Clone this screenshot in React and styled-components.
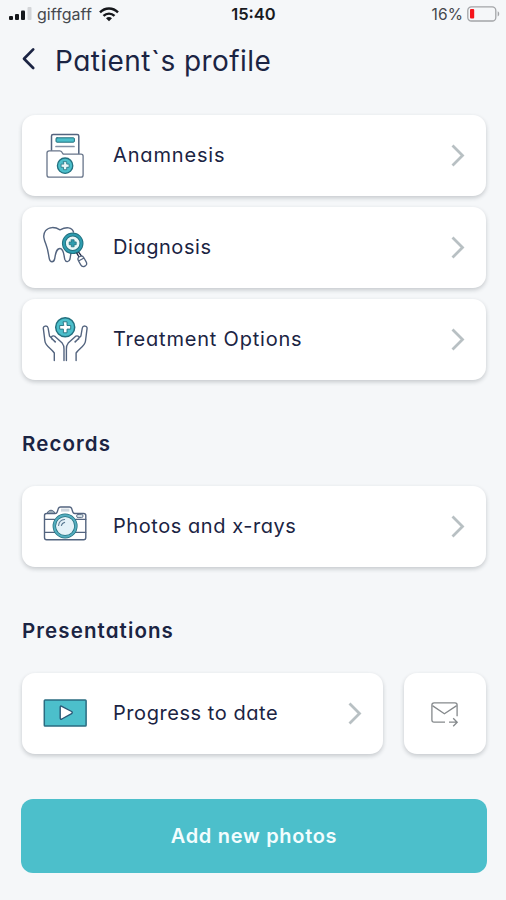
import React from "react";
import styled, { createGlobalStyle } from "styled-components";

const INK = "#1b2443";
const LINE = "#53647f";
const TEAL = "#4cbfcb";
const DEEP = "#23707f";

const App = () => {
  return (
    <>
      <GlobalStyle />
      <Screen>
        <StatusBar>
          <Carrier>
            <SignalIcon />
            <Network>giffgaff</Network>
            <WifiIcon />
          </Carrier>
          <Clock>15:40</Clock>
          <Power>
            <Percent>16%</Percent>
            <BatteryIcon />
          </Power>
        </StatusBar>

        <Header>
          <BackButton aria-label="Back">
            <svg width="14" height="24" viewBox="0 0 14 24" fill="none">
              <path d="M11.2 2.4 L2 11.8 L11.2 21" stroke={INK} strokeWidth="2.7" strokeLinecap="round" strokeLinejoin="round" />
            </svg>
          </BackButton>
          <Title>Patient`s profile</Title>
        </Header>

        <CardList>
          <MenuCard icon={<FolderIcon />} label="Anamnesis" track="0.85px" />
          <MenuCard icon={<ToothIcon />} label="Diagnosis" track="0.55px" />
          <MenuCard icon={<HandsIcon />} label="Treatment Options" track="0.8px" />
        </CardList>

        <Heading>Records</Heading>
        <MenuCard icon={<CameraIcon />} label="Photos and x-rays" track="0.56px" />

        <Heading>Presentations</Heading>
        <Row>
          <MenuCard icon={<VideoIcon />} label="Progress to date" track="0.56px" />
          <SendButton aria-label="Send">
            <MailIcon />
          </SendButton>
        </Row>

        <AddButton>Add new photos</AddButton>
      </Screen>
    </>
  );
};

export default App;

const MenuCard = ({ icon, label, track }) => (
  <Card>
    {icon}
    <Label $track={track}>{label}</Label>
    <svg width="16" height="26" viewBox="0 0 16 26" fill="none">
      <path d="M2.5 3.5 L12.5 13.5 L2.5 23.5" stroke="#b8c0c3" strokeWidth="2.8" />
    </svg>
  </Card>
);

const SignalIcon = () => (
  <svg width="24" height="14" viewBox="0 0 24 14">
    <rect x="0" y="9" width="4" height="4" rx="1" fill="#15171b" />
    <rect x="6" y="7" width="4" height="6" rx="1" fill="#15171b" />
    <rect x="12" y="3.5" width="4" height="9.5" rx="1" fill="#15171b" />
    <rect x="18.5" y="0" width="4" height="13" rx="1" fill="#d3d5d8" />
  </svg>
);

const WifiIcon = () => (
  <svg width="20" height="15" viewBox="0 0 20 15" fill="none" stroke="#15171b" strokeWidth="2.4">
    <path d="M1 5.4 C6 0.2 14 0.2 19 5.4" />
    <path d="M4.5 8.9 C7.6 5.8 12.4 5.8 15.5 8.9" />
    <path d="M7 11.2 C8.8 9.6 11.2 9.6 13 11.2 L10 14.3 Z" fill="#15171b" stroke="none" />
  </svg>
);

const BatteryIcon = () => (
  <svg width="33" height="16" viewBox="0 0 33 16" fill="none">
    <rect x="0.8" y="0.8" width="28" height="14.2" rx="3.6" stroke="#a3a5a8" strokeWidth="1.3" />
    <rect x="3" y="3" width="4.2" height="9.6" rx="1" fill="#f5141b" />
    <path d="M30.7 5.3 C32.7 6 32.7 9.8 30.7 10.5 Z" fill="#a3a5a8" />
  </svg>
);

const FolderIcon = () => (
  <Icon viewBox="0 0 48 48">
    <path d="M10.5 22 V5 Q10.5 3.4 12.1 3.4 H36.2 Q37.8 3.4 37.8 5 V22.5" stroke={LINE} strokeWidth="1.5" />
    <rect x="15" y="6.8" width="18.4" height="4.4" rx="1" fill={TEAL} stroke={DEEP} strokeWidth="1" />
    <path d="M15 15.5 H33" stroke="#8391a5" strokeWidth="1.7" />
    <path d="M6 22 Q6 19.8 8.2 19.8 H18.6 Q20.2 19.8 21 21.3 L22.2 23.2 H40 Q42.1 23.2 42.1 25.2 V44 Q42.1 46.2 40 46.2 H8.2 Q6 46.2 6 44 Z" fill="#fff" stroke="#68758a" strokeWidth="1.3" />
    <circle cx="24.1" cy="34.7" r="7.7" fill={TEAL} stroke={DEEP} strokeWidth="1.3" />
    <path d="M22.5 30.7 H25.7 V33.1 H28.1 V36.3 H25.7 V38.7 H22.5 V36.3 H20.1 V33.1 H22.5 Z" fill="#e8f6f7" stroke={DEEP} strokeWidth="0.8" />
  </Icon>
);

const ToothIcon = () => (
  <Icon viewBox="0 0 48 48">
    <path
      d="M32.5 9 C31 4.2 25.5 3.6 19 6.8 C14 3.8 8 3.6 4.6 7.6 C1.2 12 3.2 17 5 21.5 C7.2 27 7.2 31 8.4 36.2 C9.2 39.6 12.8 39.6 13.6 36 C14.6 31 15 25.5 19 25.5 C23 25.5 22.6 32 23.8 36.4 C24.8 39.6 28.2 39.2 29 36 L29.8 31"
      stroke={LINE}
      strokeWidth="1.4"
    />
    <circle cx="31.7" cy="20.3" r="8.8" fill="#e9f7f8" stroke={DEEP} strokeWidth="4" />
    <circle cx="31.7" cy="20.3" r="8.8" stroke="#2d9caf" strokeWidth="2.2" />
    <path d="M30.3 16.8 H33.1 V18.9 H35.2 V21.7 H33.1 V23.8 H30.3 V21.7 H28.2 V18.9 H30.3 Z" fill="#2f9daf" stroke={DEEP} strokeWidth="0.8" />
    <path d="M35.8 30.2 L38 34 M37.8 29.4 L40.2 32.6" stroke={INK} strokeWidth="1.3" />
    <rect x="38.2" y="32.8" width="6.2" height="11" rx="3.1" transform="rotate(-29 41.3 38.3)" fill="#fff" stroke={LINE} strokeWidth="1.3" />
    <path d="M38.4 37.6 L42.6 35.2" stroke={LINE} strokeWidth="1.2" />
  </Icon>
);

const HandsIcon = () => (
  <Icon viewBox="0 0 48 48">
    <circle cx="24.2" cy="12.3" r="9.5" fill={TEAL} stroke={DEEP} strokeWidth="1.5" />
    <path d="M22.4 6.8 H26 V10.5 H29.7 V14.1 H26 V17.8 H22.4 V14.1 H18.7 V10.5 H22.4 Z" fill="#fff" stroke={DEEP} strokeWidth="0.9" />
    <HandPath />
    <g transform="translate(48.4 0) scale(-1 1)">
      <HandPath />
    </g>
  </Icon>
);

const HandPath = () => (
  <path
    d="M13.3 45.5 V38 C10 33.5 4.3 30.8 3.9 26 L2.3 13.2 C2.1 10.6 6.6 10.2 7.1 13 L8.5 21 L14.2 27 M14.4 26.8 L10.6 23.6 C9.6 21.4 12.3 20.2 14 21.4 L21.2 28.1 C22.8 30 23 31.8 23 34 V45.5"
    stroke={LINE}
    strokeWidth="1.4"
  />
);

const CameraIcon = () => (
  <Icon viewBox="0 0 48 48">
    <path d="M5.6 11.5 H14.2 Q15.7 11.5 16.2 10 L17.4 6.4 Q18 5 19.5 5 H28.5 Q30 5 30.6 6.4 L31.8 10 Q32.3 11.5 33.8 11.5 H42.6 Q44.8 11.5 44.8 13.6 V35.6 Q44.8 37.8 42.6 37.8 H5.6 Q3.5 37.8 3.5 35.6 V13.6 Q3.5 11.5 5.6 11.5 Z" stroke={LINE} strokeWidth="1.4" />
    <path d="M6.4 11 C6.8 7.2 13.2 7.2 13.6 11 Z" fill="#9dadb9" stroke={LINE} strokeWidth="1" />
    <rect x="20" y="6.6" width="8.4" height="3" fill="#cdd6de" />
    <path d="M3.5 17.4 H13.5 M34.6 17.4 H44.8 M3.5 30.3 H13.5 M34.6 30.3 H44.8" stroke={LINE} strokeWidth="1.2" />
    <rect x="35.6" y="12.4" width="6.4" height="3.2" rx="1.5" fill="#d5e4e9" stroke={LINE} strokeWidth="0.9" />
    <circle cx="24.1" cy="24" r="10.8" fill="#e4f2f8" stroke={DEEP} strokeWidth="3.4" />
    <circle cx="24.1" cy="24" r="10.8" stroke="#55aebf" strokeWidth="1.9" />
    <path d="M17.6 23.5 C17.9 20.2 20.4 17.8 23.6 17.5 M20.4 23.5 C20.8 21.8 22 20.7 23.6 20.4" stroke="#5b7b93" strokeWidth="1.1" />
  </Icon>
);

const VideoIcon = () => (
  <Icon viewBox="0 0 48 48">
    <rect x="3.3" y="10.9" width="41.8" height="26.2" rx="0.8" fill={TEAL} stroke="#2a6c81" strokeWidth="1.5" />
    <path d="M19.2 18.2 Q19.2 16.5 20.8 17.3 L30.6 22.5 Q31.9 23.6 30.6 24.7 L20.8 30 Q19.2 30.8 19.2 29.1 Z" fill="#fff" stroke="#2b5876" strokeWidth="1.4" />
  </Icon>
);

const MailIcon = () => (
  <svg width="30" height="30" viewBox="0 0 30 30" fill="none" stroke="#85898c" strokeWidth="1.3">
    <path d="M15 24.2 H4 Q1.9 24.2 1.9 22 V7 Q1.9 4.8 4.1 4.8 H25 Q27.1 4.8 27.1 7 V18.2" />
    <path d="M2.4 7.6 L14.4 15.8 L26.7 7.6" />
    <path d="M19 24.2 H27 M23.2 20.2 L27.2 24.2 L23.2 28.2" />
  </svg>
);

const GlobalStyle = createGlobalStyle`
  * {
    box-sizing: border-box;
  }

  body {
    margin: 0;
    background: #f5f7f9;
    color: ${INK};
    font-family: "Inter", "Open Sans", sans-serif;
    /* single-storey a */
    font-feature-settings: "cv11" 1;
  }

  button {
    border: 0;
    padding: 0;
    font: inherit;
    font-feature-settings: inherit;
  }
`;

const Screen = styled.main`
  width: 506px;
  height: 900px;
  padding: 0 20px 0 22px;
  display: flex;
  flex-direction: column;
  overflow: hidden;
`;

const StatusBar = styled.div`
  display: grid;
  grid-template-columns: 1fr auto 1fr;
  align-items: center;
  height: 28px;
  margin: 0 -14px 0 -13px;
  color: #191b1f;
  font-feature-settings: normal;
`;

const Carrier = styled.div`
  display: flex;
  align-items: center;
`;

const Network = styled.span`
  margin: 0 7px 0 4px;
  font-size: 16px;
  letter-spacing: 0.05px;
  color: #45484d;
`;

const Clock = styled.span`
  margin-right: 2px;
  font-size: 16.5px;
  font-weight: 600;
`;

const Power = styled.div`
  display: flex;
  align-items: center;
  justify-content: flex-end;
  gap: 4px;
`;

const Percent = styled.span`
  font-size: 15.5px;
  letter-spacing: 0.1px;
  color: #45484d;
`;

const Header = styled.header`
  display: flex;
  align-items: center;
  height: 66px;
`;

const BackButton = styled.button`
  display: flex;
  width: 33px;
  margin-top: -5px;
  background: none;
`;

const Title = styled.h1`
  margin: 0;
  font-size: 28px;
  font-weight: 400;
  letter-spacing: 0.44px;
`;

const CardList = styled.div`
  display: flex;
  flex-direction: column;
  gap: 10.5px;
  margin-top: 20.5px;
`;

const Card = styled.div`
  display: flex;
  align-items: center;
  flex: 1 0 auto;
  height: 81.5px;
  max-height: 81.5px;
  padding: 0 20px 0 19px;
  border-radius: 13px;
  background: #fff;
  box-shadow: 0 2px 4px rgba(30, 40, 50, 0.22);
`;

const Icon = styled.svg`
  width: 48px;
  height: 48px;
  fill: none;
  stroke-linecap: round;
  stroke-linejoin: round;
`;

const Label = styled.span`
  flex: 1;
  margin-left: 24px;
  font-size: 20px;
  letter-spacing: ${(props) => props.$track};
  white-space: nowrap;
`;

const Heading = styled.h2`
  margin: 48.5px 0 27px;
  font-size: 20.5px;
  font-weight: 600;
  line-height: 30px;
  letter-spacing: 1.1px;
`;

const Row = styled.div`
  display: flex;
  gap: 21px;
`;

const SendButton = styled.button`
  display: flex;
  align-items: center;
  justify-content: center;
  width: 82px;
  height: 81.5px;
  border-radius: 13px;
  background: #fff;
  box-shadow: 0 2px 4px rgba(30, 40, 50, 0.22);
`;

const AddButton = styled.button`
  height: 74px;
  margin: 45px -1px 0;
  border-radius: 12px;
  background: ${TEAL};
  color: #f3fdfe;

  && {
    font-size: 20px;
    font-weight: 600;
    letter-spacing: 0.7px;
  }
`;
